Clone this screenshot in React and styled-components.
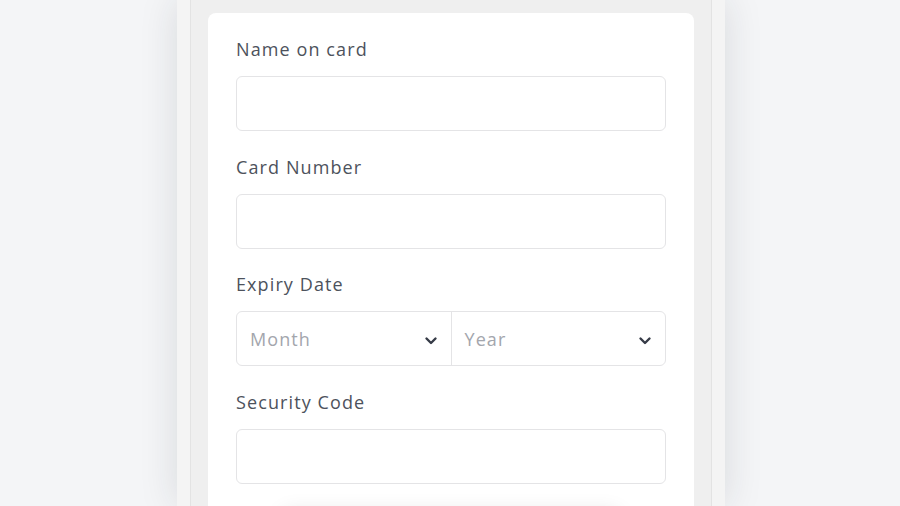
import React from 'react'
import styled, { createGlobalStyle } from 'styled-components'

const GlobalStyle = createGlobalStyle`
  html, body {
    margin: 0;
    padding: 0;
    background: #f4f5f7;
    overflow: hidden;
  }
  body {
    font-family: 'Open Sans', 'Liberation Sans', sans-serif;
  }
`

const Page = styled.div`
  display: flex;
  justify-content: center;
  height: 506px;
  padding-left: 2px;
  overflow: hidden;
  background: #f4f5f7;
`

const Device = styled.div`
  flex: 0 0 548px;
  padding: 0 13px;
  box-sizing: border-box;
  background: #f4f4f4;
  box-shadow: 0 0 36px rgba(30, 35, 50, 0.13);
`

const Screen = styled.div`
  height: 100%;
  background: #efefef;
  border-left: 1px solid #e3e3e3;
  border-right: 1px solid #e3e3e3;
  padding: 13px 17px 0;
  box-sizing: border-box;
`

const Card = styled.form`
  background: #fff;
  border-radius: 8px;
  padding: 24px 28px 40px;
  display: flex;
  flex-direction: column;
  gap: 23.5px;
`

const Field = styled.div`
  display: flex;
  flex-direction: column;
  gap: 15px;
`

const Label = styled.label`
  font-size: 18px;
  line-height: 24px;
  color: #4d525c;
  letter-spacing: 1.1px;
`

const Input = styled.input`
  height: 55px;
  box-sizing: border-box;
  border: 1px solid #e4e4e6;
  border-radius: 6px;
  background: #fff;
  font: inherit;
  outline: none;
`

const SelectRow = styled.div`
  display: flex;
  height: 55px;
  box-sizing: border-box;
  border: 1px solid #e4e4e6;
  border-radius: 6px;
`

const Select = styled.div`
  flex: 1;
  display: flex;
  align-items: center;
  justify-content: space-between;
  padding: 0 13px;
  border-left: ${p => (p.$divider ? '1px solid #e4e4e6' : 'none')};
  font-size: 18px;
  letter-spacing: 1.1px;
  color: #a3a6ad;
`

const Chevron = () => (
  <svg width="14" height="10" viewBox="0 0 14 10" style={{ marginTop: 5 }}>
    <path d="M2.5 2.5 L7 7 L11.5 2.5" fill="none" stroke="#363b47" strokeWidth="2.4" strokeLinecap="round" strokeLinejoin="round" />
  </svg>
)

const Submit = styled.button`
  margin: 4px 46px 0;
  height: 50px;
  border: none;
  border-radius: 8px;
  background: #fff;
  box-shadow: 0 0 20px rgba(0, 0, 0, 0.1);
`

export default function App() {
  return (
    <Page>
      <GlobalStyle />
      <Device>
        <Screen>
          <Card onSubmit={e => e.preventDefault()}>
            <Field>
              <Label>Name on card</Label>
              <Input type="text" />
            </Field>
            <Field>
              <Label>Card Number</Label>
              <Input type="text" />
            </Field>
            <Field>
              <Label>Expiry Date</Label>
              <SelectRow>
                <Select>
                  Month
                  <Chevron />
                </Select>
                <Select $divider>
                  Year
                  <Chevron />
                </Select>
              </SelectRow>
            </Field>
            <Field>
              <Label>Security Code</Label>
              <Input type="text" />
            </Field>
            <Submit type="submit" aria-label="Pay" />
          </Card>
        </Screen>
      </Device>
    </Page>
  )
}
